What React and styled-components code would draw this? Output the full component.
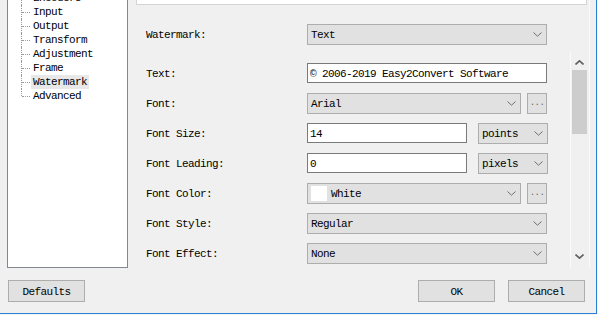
import React from 'react'
import styled, { createGlobalStyle } from 'styled-components'

const treeItems = ['Encoders', 'Input', 'Output', 'Transform', 'Adjustment', 'Frame', 'Watermark', 'Advanced']

const Chevron = ({ up, down }) => (
  <svg width="9" height="5" viewBox="0 0 9 5">
    <path d={up ? 'M0.5 4.5 L4.5 0.8 L8.5 4.5' : 'M0.5 0.5 L4.5 4.2 L8.5 0.5'} fill="none" stroke={down || up ? '#606060' : '#707070'} strokeWidth={down || up ? 1.6 : 1} />
  </svg>
)

const Select = ({ width, children }) => (
  <Combo $w={width}>
    <ComboText>{children}</ComboText>
    <Chevron />
  </Combo>
)

const Field = ({ label, children }) => (
  <FieldRow>
    <Label>{label}</Label>
    {children}
  </FieldRow>
)

const App = () => (
  <>
    <GlobalStyle />
    <Window>
      <Main>
        <TreeBox>
          <TreeList>
            {treeItems.map((item, i) => (
              <TreeItem key={item} $last={i === treeItems.length - 1}>
                <TreeLabel $selected={item === 'Watermark'}>{item}</TreeLabel>
              </TreeItem>
            ))}
          </TreeList>
        </TreeBox>
        <RightPanel>
          <PreviewStrip />
          <TopFields>
            <Field label="Watermark:">
              <Select width={240}>Text</Select>
            </Field>
          </TopFields>
          <ScrollArea>
            <Rows>
              <Field label="Text:">
                <TextInput $w={240}>© 2006-2019 Easy2Convert Software</TextInput>
              </Field>
              <Field label="Font:">
                <Select width={214}>Arial</Select>
                <DotsButton>...</DotsButton>
              </Field>
              <Field label="Font Size:">
                <TextInput $w={160}>14</TextInput>
                <Gap />
                <Select width={70}>points</Select>
              </Field>
              <Field label="Font Leading:">
                <TextInput $w={160}>0</TextInput>
                <Gap />
                <Select width={70}>pixels</Select>
              </Field>
              <Field label="Font Color:">
                <Combo $w={214}>
                  <ComboText>
                    <Swatch />
                    White
                  </ComboText>
                  <Chevron />
                </Combo>
                <DotsButton>...</DotsButton>
              </Field>
              <Field label="Font Style:">
                <Select width={240}>Regular</Select>
              </Field>
              <Field label="Font Effect:">
                <Select width={240}>None</Select>
              </Field>
            </Rows>
            <ScrollBar>
              <ArrowBox $top>
                <Chevron up />
              </ArrowBox>
              <Thumb />
              <ArrowBox>
                <Chevron down />
              </ArrowBox>
            </ScrollBar>
          </ScrollArea>
        </RightPanel>
      </Main>
      <Footer>
        <Button>Defaults</Button>
        <Spacer />
        <Button>OK</Button>
        <Button>Cancel</Button>
      </Footer>
    </Window>
  </>
)

export default App

const GlobalStyle = createGlobalStyle`
  html, body {
    margin: 0;
    padding: 0;
    background: #f4f4f4;
  }
  body {
    font-family: "Liberation Mono", "Courier New", monospace;
    font-size: 11px;
    letter-spacing: -0.6px;
    color: #000;
  }
`

const Window = styled.div`
  width: 597px;
  height: 314px;
  box-sizing: border-box;
  background: #f0f0f0;
  border-right: 1px solid #2b7fd6;
  border-bottom: 1px solid #2b7fd6;
  display: flex;
  flex-direction: column;
  overflow: hidden;
`

const Main = styled.div`
  display: flex;
  height: 268px;
  padding: 0 6px 0 7px;
  gap: 9px;
`

const TreeBox = styled.div`
  width: 121px;
  flex: none;
  box-sizing: border-box;
  background: #fff;
  border: 1px solid #828790;
  border-top: none;
  overflow: hidden;
`

const TreeList = styled.div`
  margin-top: -9px;
`

const TreeItem = styled.div`
  position: relative;
  height: 14px;
  line-height: 15px;
  padding-left: 23px;

  &::before {
    content: '';
    position: absolute;
    left: 13px;
    top: 0;
    height: ${p => (p.$last ? '7px' : '14px')};
    border-left: 1px dotted #9a9a9a;
  }

  &::after {
    content: '';
    position: absolute;
    left: 14px;
    top: 7px;
    width: 8px;
    border-top: 1px dotted #9a9a9a;
  }
`

const TreeLabel = styled.span`
  display: inline-block;
  height: 14px;
  padding: 0 2px;
  background: ${p => (p.$selected ? '#e8e8e8' : 'transparent')};
`

const RightPanel = styled.div`
  flex: 1;
  display: flex;
  flex-direction: column;
  border-right: 1px solid #fafafa;
`

const PreviewStrip = styled.div`
  height: 5px;
  margin: 0 2px 0 -1px;
  box-sizing: border-box;
  background: #fff;
  border: 1px solid #d4d4d4;
  border-top: none;
`

const TopFields = styled.div`
  margin-top: 14px;
`

const FieldRow = styled.div`
  display: flex;
  align-items: center;
  height: 30px;
  padding-left: 9px;
`

const Label = styled.div`
  width: 161px;
  flex: none;
  padding-top: 2px;
`

const Combo = styled.div`
  width: ${p => p.$w}px;
  height: 21px;
  box-sizing: border-box;
  display: flex;
  align-items: center;
  justify-content: space-between;
  padding: 0 4px 0 3px;
  background: #e1e1e1;
  border: 1px solid #adadad;
`

const ComboText = styled.span`
  display: flex;
  align-items: center;
  padding-top: 2px;
`

const Swatch = styled.span`
  width: 16px;
  height: 15px;
  margin: -2px 4px 0 0;
  background: #fff;
`

const TextInput = styled.div`
  width: ${p => p.$w}px;
  height: 20px;
  box-sizing: border-box;
  display: flex;
  align-items: center;
  padding: 2px 0 0 2px;
  background: #fff;
  border: 1px solid #7a7a7a;
  white-space: nowrap;
`

const DotsButton = styled.div`
  width: 20px;
  height: 21px;
  box-sizing: border-box;
  margin-left: 6px;
  display: flex;
  align-items: center;
  justify-content: center;
  background: #e1e1e1;
  border: 1px solid #adadad;
  color: #666;
  font-size: 9px;
`

const Gap = styled.div`
  width: 11px;
`

const ScrollArea = styled.div`
  display: flex;
  height: 216px;
  margin: 3px 2px 0 0;
`

const Rows = styled.div`
  flex: 1;
  padding-top: 6px;
`

const ScrollBar = styled.div`
  width: 17px;
  box-sizing: border-box;
  border-left: 1px solid #fbfbfb;
  display: flex;
  flex-direction: column;
  align-items: center;
`

const ArrowBox = styled.div`
  height: 17px;
  width: 100%;
  display: flex;
  align-items: center;
  justify-content: center;
  padding-top: ${p => (p.$top ? '3px' : '0')};
  margin-top: ${p => (p.$top ? '0' : 'auto')};
  margin-bottom: ${p => (p.$top ? '0' : '3px')};
  box-sizing: border-box;
`

const Thumb = styled.div`
  width: 15px;
  height: 64px;
  margin-top: 1px;
  background: #cdcdcd;
`

const Footer = styled.div`
  display: flex;
  gap: 13px;
  padding: 12px 11px 0 8px;
`

const Spacer = styled.div`
  flex: 1;
`

const Button = styled.div`
  width: 77px;
  height: 22px;
  box-sizing: border-box;
  display: flex;
  align-items: center;
  justify-content: center;
  padding-top: 2px;
  background: #e1e1e1;
  border: 1px solid #adadad;
`
